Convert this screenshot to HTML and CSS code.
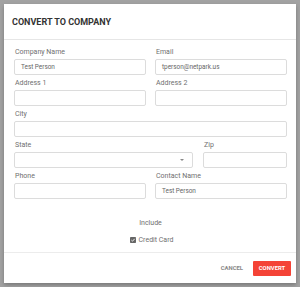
FILE: index.html
```html
<!DOCTYPE html>
<html lang="en">
<head>
  <meta charset="UTF-8">
  <title>Convert to Company</title>
  <link rel="stylesheet" href="styles.css">
</head>
<body>
  <div class="modal">
    <div class="modal-header">
      <h2>CONVERT TO COMPANY</h2>
    </div>
    <div class="modal-body">
      <div class="row two">
        <div class="field">
          <label>Company Name</label>
          <div class="input">Test Person</div>
        </div>
        <div class="field">
          <label>Email</label>
          <div class="input">tperson@netpark.us</div>
        </div>
      </div>
      <div class="row two">
        <div class="field">
          <label>Address 1</label>
          <div class="input"></div>
        </div>
        <div class="field">
          <label>Address 2</label>
          <div class="input"></div>
        </div>
      </div>
      <div class="row">
        <div class="field">
          <label>City</label>
          <div class="input"></div>
        </div>
      </div>
      <div class="row state-zip">
        <div class="field">
          <label>State</label>
          <div class="input select"><span class="caret"></span></div>
        </div>
        <div class="field">
          <label>Zip</label>
          <div class="input"></div>
        </div>
      </div>
      <div class="row two">
        <div class="field">
          <label>Phone</label>
          <div class="input"></div>
        </div>
        <div class="field">
          <label>Contact Name</label>
          <div class="input">Test Person</div>
        </div>
      </div>

      <div class="include">
        <p>Include</p>
        <div class="check">
          <svg width="6" height="6" viewBox="0 0 6 6">
            <rect width="6" height="6" rx="0.8" fill="#666"/>
            <path d="M1.4 3.1 L2.5 4.2 L4.7 1.8" stroke="#fff" stroke-width="0.9" fill="none"/>
          </svg>
          <span>Credit Card</span>
        </div>
      </div>
    </div>
    <div class="modal-footer">
      <button class="btn-cancel">CANCEL</button>
      <button class="btn-convert">CONVERT</button>
    </div>
  </div>
</body>
</html>
```

FILE: styles.css
```css
body {
  font-family: Roboto, 'Liberation Sans', sans-serif;
  margin: 0;
  padding: 4px 4px 0 4px;
  height: 287px;
  box-sizing: border-box;
  background: #a2a2a2;
  overflow: hidden;
}

.modal {
  background: white;
  width: 292px;
  height: 279px;
  display: flex;
  flex-direction: column;
  box-shadow: 0 2px 4px rgba(0, 0, 0, 0.25);
}

.modal-header {
  height: 35px;
  border-bottom: 1px solid #e6e6e6;
  padding: 0 8px;
  display: flex;
  align-items: center;
}

h2 {
  margin: 0;
  font-size: 9px;
  font-weight: bold;
  color: #333;
}

.modal-body {
  flex: 1;
  padding: 7px 9px 0 10px;
}

.row {
  display: grid;
  grid-template-columns: 1fr;
  margin-bottom: 3px;
}

.row.two {
  grid-template-columns: 1fr 1fr;
  column-gap: 9px;
}

.row.state-zip {
  grid-template-columns: 179px 1fr;
  column-gap: 10px;
}

label {
  display: block;
  font-size: 7px;
  line-height: 10px;
  color: #6f6f6f;
  margin: 0 0 2px 1px;
}

.input {
  height: 16px;
  box-sizing: border-box;
  border: 1px solid #dcdcdc;
  border-radius: 2px;
  padding: 0 6px;
  font-size: 6.4px;
  line-height: 14px;
  color: #666;
  position: relative;
}

.caret {
  position: absolute;
  right: 8px;
  top: 6px;
  border-left: 2px solid transparent;
  border-right: 2px solid transparent;
  border-top: 2px solid #888;
}

.include {
  text-align: center;
  margin-top: 19px;
  font-size: 7px;
  color: #6f6f6f;
}

.include p {
  margin: 0;
  line-height: 10px;
}

.check {
  margin-top: 7px;
  display: flex;
  justify-content: center;
  align-items: center;
  gap: 3px;
  line-height: 10px;
  padding-left: 2px;
}

.modal-footer {
  height: 30px;
  border-top: 1px solid #ececec;
  display: flex;
  justify-content: flex-end;
  align-items: center;
  padding-right: 5px;
  gap: 10px;
}

button {
  font-family: Roboto, 'Liberation Sans', sans-serif;
  font-size: 5.9px;
  font-weight: bold;
  border: none;
  cursor: pointer;
  padding: 0;
}

.btn-cancel {
  background: none;
  color: #888;
}

.btn-convert {
  background: #f44336;
  color: white;
  width: 38px;
  height: 15px;
  border-radius: 1px;
}
```
